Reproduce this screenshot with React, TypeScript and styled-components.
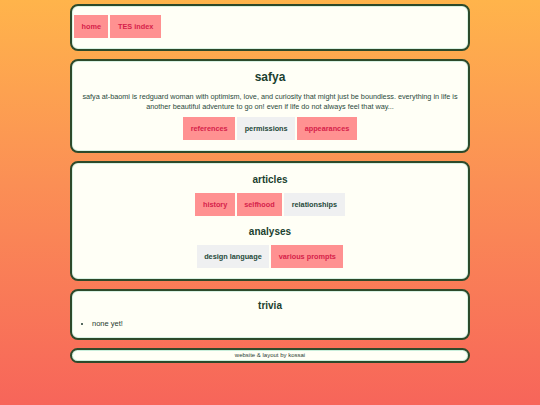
import { createGlobalStyle } from 'styled-components';
import styled from 'styled-components';

const GlobalStyle = createGlobalStyle`
    html, body {
        margin: 0;
        padding: 0;
    }
    body {
        min-height: 100vh;
        background: linear-gradient(180deg, #ffb44b 0%, #fb8f55 45%, #f7655a 100%);
        font-family: "Liberation Sans", Arial, sans-serif;
        color: #1f4a3a;
    }
`;

const Page = styled.div`
    display: flex;
    flex-direction: column;
    align-items: center;
    gap: 8px;
    padding-top: 4px;
`;

const Card = styled.section<{ $pad?: string }>`
    width: 400px;
    box-sizing: border-box;
    background-color: #fffff6;
    border: 2px solid #2d4a2b;
    border-radius: 8px;
    box-shadow: inset 0 0 0 1px #d9f2e4;
    padding: ${(p) => p.$pad || '10px 6px'};
    text-align: center;
`;

const Nav = styled.nav`
    display: flex;
    gap: 2px;
`;

const Row = styled.div`
    display: flex;
    justify-content: center;
    gap: 2px;
`;

const Button = styled.a<{ $plain?: boolean }>`
    display: block;
    height: 23px;
    line-height: 23px;
    padding: 0 7.5px;
    font-size: 7.3px;
    font-weight: bold;
    text-decoration: none;
    cursor: pointer;
    background-color: ${(p) => (p.$plain ? '#eff0f1' : '#ff9191')};
    color: ${(p) => (p.$plain ? '#1f4a3a' : '#d6224a')};
`;

const Title = styled.h1`
    margin: 0 0 8px;
    font-size: 12px;
    line-height: 14px;
    color: #1b3f30;
`;

const Heading = styled.h2<{ $gap?: number }>`
    margin: 0 0 ${(p) => p.$gap ?? 7}px;
    font-size: 10px;
    line-height: 12px;
    color: #1b3f30;
`;

const Blurb = styled.p`
    margin: 0 0 5px;
    font-size: 7.25px;
    line-height: 10px;
    color: #2a4a3b;
`;

const List = styled.ul`
    margin: 0;
    padding-left: 14px;
    text-align: left;
    font-size: 7.5px;
    line-height: 10px;
    color: #1f3a30;
`;

const Spacer = styled.div`
    height: 10px;
`;

const Footer = styled.footer`
    width: 400px;
    box-sizing: border-box;
    background-color: #fffff6;
    border: 2px solid #2d4a2b;
    border-radius: 8px;
    box-shadow: inset 0 0 0 1px #c9eedb;
    font-size: 6px;
    line-height: 11px;
    text-align: center;
    color: #2b3d33;
`;

export default function App() {
    return (
        <>
            <GlobalStyle />
            <Page>
                <Card $pad="9px 2px 11px">
                    <Nav>
                        <Button>home</Button>
                        <Button>TES index</Button>
                    </Nav>
                </Card>

                <Card $pad="9px 6px 11px">
                    <Title>safya</Title>
                    <Blurb>
                        safya at-baomi is redguard woman with optimism, love, and curiosity that might just be boundless.
                        everything in life is another beautiful adventure to go on! even if life do not always feel that
                        way...
                    </Blurb>
                    <Row>
                        <Button>references</Button>
                        <Button $plain>permissions</Button>
                        <Button>appearances</Button>
                    </Row>
                </Card>

                <Card $pad="11px 6px">
                    <Heading>articles</Heading>
                    <Row>
                        <Button>history</Button>
                        <Button>selfhood</Button>
                        <Button $plain>relationships</Button>
                    </Row>
                    <Spacer />
                    <Heading>analyses</Heading>
                    <Row>
                        <Button $plain>design language</Button>
                        <Button>various prompts</Button>
                    </Row>
                </Card>

                <Card $pad="9px 6px">
                    <Heading>trivia</Heading>
                    <List>
                        <li>none yet!</li>
                    </List>
                </Card>

                <Footer>website &amp; layout by kossai</Footer>
            </Page>
        </>
    );
}
